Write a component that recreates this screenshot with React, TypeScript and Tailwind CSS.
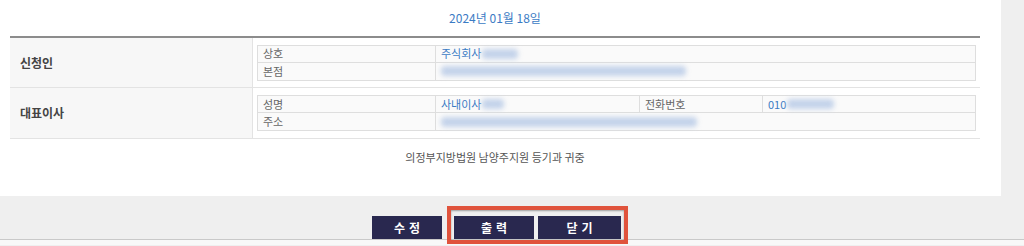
import React from "react";

const Blur = ({ w }: { w: number }) => (
  <span
    className="inline-block h-[10px] bg-[#c4d3ea] blur-[2.5px] rounded-sm align-middle"
    style={{ width: w }}
  />
);

const InnerRow = ({ children, last }: { children: React.ReactNode; last?: boolean }) => (
  <div className={`h-[17px] flex items-center ${last ? "" : "border-b border-[#dedede]"}`}>{children}</div>
);

const Label = ({ children, w }: { children: React.ReactNode; w: string }) => (
  <div className={`${w} h-full flex items-center pl-[5px] border-r border-[#dedede] text-[#666]`}>{children}</div>
);

const Value = ({ children, w }: { children: React.ReactNode; w?: string }) => (
  <div className={`${w ?? "flex-1"} h-full flex items-center pl-[5px] text-[#3b7bc4] gap-[1px]`}>{children}</div>
);

const App = () => {
  return (
    <div className="w-[1024px] h-[246px] bg-[#efefef] relative overflow-hidden font-['Noto_Sans_CJK_KR','Noto_Sans',sans-serif]">
      <div className="flex">
        <div className="w-[1001px] h-[196px] bg-white flex flex-col">
          <div className="w-[970px] ml-[10px] h-[36px] pt-[10px] text-center text-[12px] leading-[16px] text-[#3b7bc4]">
            2024년 01월 18일
          </div>
          <div className="w-[970px] ml-[10px] border-t-2 border-[#8c8c8c] border-b border-b-[#e3e3e3] text-[11px]">
            <div className="flex h-[50px] border-b border-[#e3e3e3]">
              <div className="w-[243px] bg-[#f7f7f7] border-r border-[#e3e3e3] flex items-center pl-[10px] text-[12px] font-bold text-[#444]">
                신청인
              </div>
              <div className="flex-1 flex items-center px-[4px]">
                <div className="w-full border border-[#dedede] bg-[#fafafa]">
                  <InnerRow>
                    <Label w="w-[178px]">상호</Label>
                    <Value>
                      주식회사 <Blur w={36} />
                    </Value>
                  </InnerRow>
                  <InnerRow last>
                    <Label w="w-[178px]">본점</Label>
                    <Value>
                      <Blur w={245} />
                    </Value>
                  </InnerRow>
                </div>
              </div>
            </div>
            <div className="flex h-[50px]">
              <div className="w-[243px] bg-[#f7f7f7] border-r border-[#e3e3e3] flex items-center pl-[10px] text-[12px] font-bold text-[#444]">
                대표이사
              </div>
              <div className="flex-1 flex items-center px-[4px]">
                <div className="w-full border border-[#dedede] bg-[#fafafa]">
                  <InnerRow>
                    <Label w="w-[178px]">성명</Label>
                    <Value w="w-[204px] border-r border-[#dedede]">
                      사내이사 <Blur w={22} />
                    </Value>
                    <Label w="w-[123px]">전화번호</Label>
                    <Value>
                      010 <Blur w={47} />
                    </Value>
                  </InnerRow>
                  <InnerRow last>
                    <Label w="w-[178px]">주소</Label>
                    <Value>
                      <Blur w={256} />
                    </Value>
                  </InnerRow>
                </div>
              </div>
            </div>
          </div>
          <div className="w-[970px] ml-[10px] pt-[10px] text-center text-[11px] text-[#555]">
            의정부지방법원 남양주지원 등기과 귀중
          </div>
        </div>
      </div>
      <div className="h-[44px] flex items-end pl-[372px] border-b border-[#c9c9c9]">
        <button className="w-[70px] h-[23px] pl-[4px] bg-[#29284f] text-white text-[12px] font-bold tracking-[4px]">수정</button>
        <button className="ml-[12px] w-[80px] h-[23px] pl-[4px] bg-[#29284f] text-white text-[12px] font-bold tracking-[4px]">출력</button>
        <button className="ml-[4px] w-[83px] h-[23px] pl-[4px] bg-[#29284f] text-white text-[12px] font-bold tracking-[4px]">닫기</button>
      </div>
      <div className="h-[5px] bg-[#f8f8f8]" />
      <div className="absolute left-[447px] top-[206px] w-[181px] h-[38px] border-4 border-[#e0533c] shadow-[inset_0_1px_2px_rgba(0,0,0,0.35)]" />
    </div>
  );
};

export default App;
